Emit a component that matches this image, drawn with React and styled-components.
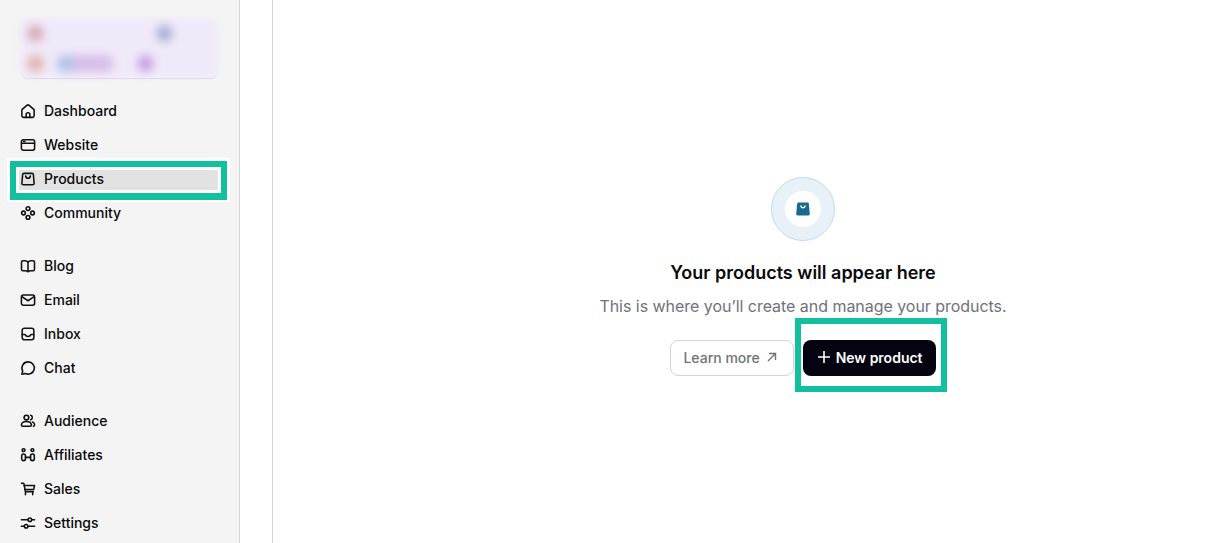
import React from 'react';
import styled, { createGlobalStyle } from 'styled-components';

const GlobalStyle = createGlobalStyle`
  html, body {
    margin: 0;
    height: 100%;
    overflow: hidden;
    background: #fff;
    font-family: Inter, "Liberation Sans", sans-serif;
  }
`;

const icons = {
  home: (
    <>
      <path d="M1.500 6.600 6.800 2a1.800 1.800 0 0 1 2.400 0l5.300 4.600v6.400a1.800 1.800 0 0 1-1.800 1.800H3.300a1.800 1.800 0 0 1-1.800-1.800z" />
      <path d="M6 14.800v-3a2 2 0 0 1 4 0v3" />
    </>
  ),
  website: (
    <>
      <rect x="1" y="2.500" width="14" height="11" rx="2" />
      <path d="M1 6.200h14" />
      <path d="M3.300 4.300h1.400" />
    </>
  ),
  products: (
    <>
      <path d="M3.600 2h8.800c.7 0 1.200.5 1.300 1.200l.8 9.300c.1.900-.6 1.700-1.500 1.700H3c-.9 0-1.600-.8-1.500-1.700l.8-9.300C2.400 2.500 2.900 2 3.600 2z" />
      <path d="M5.500 4.800c.3 1.600 1.200 2.400 2.500 2.400s2.200-.8 2.500-2.400" />
    </>
  ),
  community: (
    <>
      <circle cx="8" cy="3.300" r="2" />
      <circle cx="8" cy="12.700" r="2" />
      <circle cx="3.200" cy="8" r="2" />
      <circle cx="12.800" cy="8" r="2" />
    </>
  ),
  blog: (
    <>
      <path d="M8 3.900C7.300 2.900 6.300 2.400 5 2.400H2.600a1.500 1.500 0 0 0-1.500 1.500v7.600a1.500 1.500 0 0 0 1.500 1.500H5c1.400 0 2.400.3 3 1 .6-.7 1.600-1 3-1h2.400a1.500 1.500 0 0 0 1.500-1.500V3.900a1.500 1.500 0 0 0-1.500-1.500H11c-1.300 0-2.300.5-3 1.500z" />
      <path d="M8 3.900v10" />
    </>
  ),
  email: (
    <>
      <rect x="1" y="2.700" width="14" height="10.800" rx="2" />
      <path d="m1.500 4.500 6.500 4.300 6.500-4.300" />
    </>
  ),
  inbox: (
    <>
      <rect x="1.800" y="1.800" width="12.400" height="12.400" rx="2.400" />
      <path d="M1.800 8.600h3.100c.6 1.300 1.700 2 3.100 2s2.500-.7 3.100-2h3.100" />
    </>
  ),
  chat: (
    <path d="M8.300 1.500a6.500 6.500 0 1 1-3 12.300L1.500 14.700l.9-3.500A6.500 6.500 0 0 1 8.300 1.500z" />
  ),
  audience: (
    <>
      <circle cx="6.300" cy="4.300" r="2.500" />
      <path d="M1 12.300c0-2.400 2.300-3.800 5.300-3.800s5.300 1.400 5.300 3.800c0 .9-.6 1.300-1.300 1.300H2.300c-.7 0-1.300-.4-1.300-1.300z" />
      <path d="M10.800 1.900a2.500 2.500 0 0 1 0 4.800" />
      <path d="M12.800 9c1.300.5 2.200 1.600 2.200 3.100 0 .8-.5 1.400-1.300 1.500" />
    </>
  ),
  affiliates: (
    <>
      <circle cx="3.300" cy="2.800" r="1.500" />
      <circle cx="12.700" cy="2.800" r="1.500" />
      <rect x="1.300" y="7" width="4" height="7" rx="2" />
      <rect x="10.700" y="7" width="4" height="7" rx="2" />
      <path d="M5.300 10.500h5.400" />
    </>
  ),
  sales: (
    <>
      <path d="M1 1.800h1.700a1 1 0 0 1 1 .8L5.100 10a1 1 0 0 0 1 .8h7.400" />
      <path d="M3.900 4.200H15l-1 4.400H4.700" />
      <path d="M5.300 11v3.200M13 11v3.200" />
    </>
  ),
  settings: (
    <>
      <path d="M1 4.500h7M12 4.500h3" />
      <circle cx="10" cy="4.500" r="1.900" />
      <path d="M1 11.500h3M8 11.500h7" />
      <circle cx="6" cy="11.500" r="1.900" />
    </>
  ),
};

const navGroups = [
  [
    { label: 'Dashboard', icon: 'home' },
    { label: 'Website', icon: 'website' },
    { label: 'Products', icon: 'products', active: true },
    { label: 'Community', icon: 'community' },
  ],
  [
    { label: 'Blog', icon: 'blog' },
    { label: 'Email', icon: 'email' },
    { label: 'Inbox', icon: 'inbox' },
    { label: 'Chat', icon: 'chat' },
  ],
  [
    { label: 'Audience', icon: 'audience' },
    { label: 'Affiliates', icon: 'affiliates' },
    { label: 'Sales', icon: 'sales' },
    { label: 'Settings', icon: 'settings' },
  ],
];

const App = () => {
  return (
    <Page>
      <GlobalStyle />
      <Sidebar>
        <BlurredCard>
          <BlurRow>
            <Blob $color="#d8aebd" />
            <Blob $color="#aab4d6" $left={112} />
          </BlurRow>
          <BlurRow>
            <Blob $color="#e2b6ae" />
            <Pill />
            <Blob $color="#c9a4e8" $left={24} />
          </BlurRow>
        </BlurredCard>
        <Nav>
          {navGroups.map((group, i) => (
            <NavGroup key={i}>
              {group.map((item) => (
                <NavItem key={item.label} $active={item.active}>
                  <NavIcon viewBox="-0.5 -0.5 17 17">{icons[item.icon]}</NavIcon>
                  {item.label}
                </NavItem>
              ))}
            </NavGroup>
          ))}
        </Nav>
      </Sidebar>
      <Gutter />
      <Main>
        <Ring>
          <RingInner>
            <svg width="14" height="14" viewBox="0 0 14 14">
              <path d="M2.400.5h9.200c.6 0 1.100.5 1.200 1.100l1 10.200c.1.900-.6 1.700-1.500 1.700H1.700c-.9 0-1.600-.8-1.500-1.700l1-10.200C1.300 1 1.800.5 2.400.5z" fill="#19688f" />
              <path d="M4.900 4c.3 1.200 1 1.800 2.100 1.800S8.800 5.200 9.100 4" fill="none" stroke="#fff" strokeWidth="1.300" strokeLinecap="round" />
            </svg>
          </RingInner>
        </Ring>
        <Title>Your products will appear here</Title>
        <Subtitle>This is where you’ll create and manage your products.</Subtitle>
        <Actions>
          <LearnMore>
            Learn more
            <svg width="14" height="14" viewBox="0 0 14 14" fill="none" stroke="#71717a" strokeWidth="1.400">
              <path d="M3 11 10.500 3.500M4 3.500h6.500v6.500" />
            </svg>
          </LearnMore>
          <NewProduct>
            <svg width="14" height="14" viewBox="0 0 14 14" fill="none" stroke="#fff" strokeWidth="1.600">
              <path d="M7 1v12M1 7h12" />
            </svg>
            New product
          </NewProduct>
        </Actions>
      </Main>
    </Page>
  );
};

const Page = styled.div`
  display: flex;
  height: 543px;
  overflow: hidden;
`;

const Sidebar = styled.aside`
  box-sizing: border-box;
  flex: 0 0 240px;
  padding: 18px 21px 0 20px;
  background: #f4f4f4;
  border-right: 1px solid #d4d4d8;
`;

const BlurredCard = styled.div`
  position: relative;
  isolation: isolate;
  box-sizing: border-box;
  display: flex;
  flex-direction: column;
  gap: 13px;
  height: 61px;
  padding: 7px 7px 0 7px;
  border-bottom: 1px solid #dcc9f5;
  border-radius: 8px;

  &::before {
    content: "";
    position: absolute;
    z-index: -1;
    inset: 0;
    background: #f0e9f9;
    border-radius: 8px;
    filter: blur(3px);
  }
`;

const BlurRow = styled.div`
  display: flex;
  align-items: center;
  height: 17px;
  filter: blur(4px);
`;

const Blob = styled.span`
  flex: none;
  width: 17px;
  height: 17px;
  margin-left: ${(p) => p.$left || 0}px;
  border-radius: 50%;
  background: ${(p) => p.$color};
`;

const Pill = styled.span`
  flex: none;
  width: 56px;
  height: 17px;
  margin-left: 13px;
  border-radius: 6px;
  background: linear-gradient(90deg, #b4c5ea 0 30%, #d8bfe9 30% 100%);
`;

const Nav = styled.nav`
  display: flex;
  flex-direction: column;
  gap: 19px;
  margin-top: 15px;
`;

const NavGroup = styled.div`
  display: flex;
  flex-direction: column;
`;

const NavItem = styled.div`
  position: relative;
  z-index: 0;
  display: flex;
  align-items: center;
  gap: 8px;
  height: 34px;
  font-size: 14px;
  font-weight: 500;
  line-height: 20px;
  color: #09090b;

  ${(p) =>
    p.$active &&
    `
    &::before {
      content: "";
      position: absolute;
      z-index: -1;
      left: -1px;
      right: 0;
      top: 8px;
      height: 20px;
      background: #e2e2e2;
      box-shadow: 0 0 0 3px #fff, 0 0 0 9px #12bf9f, 0 1px 0 9px #12bf9f, 0 0 0 12px #fff;
    }
  `}
`;

const NavIcon = styled.svg`
  flex: none;
  width: 16px;
  height: 16px;
  fill: none;
  stroke: #111114;
  stroke-width: 1.650;
  stroke-linecap: round;
  stroke-linejoin: round;
`;

const Gutter = styled.div`
  box-sizing: border-box;
  flex: 0 0 33px;
  background: #fff;
  border-right: 1px solid #d4d4d8;
`;

const Main = styled.main`
  flex: 1;
  display: flex;
  flex-direction: column;
  align-items: center;
  padding: 177px 0 0 105px;
  background: #fff;
`;

const Ring = styled.div`
  box-sizing: border-box;
  display: flex;
  align-items: center;
  justify-content: center;
  width: 64px;
  height: 64px;
  background: #e8f1f7;
  border: 1px solid #bfdcea;
  border-radius: 50%;
`;

const RingInner = styled.div`
  display: flex;
  align-items: center;
  justify-content: center;
  width: 36px;
  height: 36px;
  background: #fff;
  border-radius: 50%;
`;

const Title = styled.h2`
  margin: 20px 0 0;
  font-size: 18px;
  font-weight: 600;
  line-height: 24px;
  color: #09090b;
`;

const Subtitle = styled.p`
  margin: 9px 0 0;
  font-size: 16px;
  line-height: 24px;
  letter-spacing: -0.04px;
  color: #71717a;
`;

const Actions = styled.div`
  display: flex;
  gap: 9px;
  margin-top: 22px;
`;

const LearnMore = styled.button`
  box-sizing: border-box;
  display: flex;
  align-items: center;
  gap: 5px;
  height: 36px;
  padding: 0 14px 2px 12px;
  background: #fff;
  border: 1px solid #d4d4d8;
  border-radius: 8px;
  font: 500 14px Inter, "Liberation Sans", sans-serif;
  color: #71717a;
`;

const NewProduct = styled.button`
  position: relative;
  box-sizing: border-box;
  display: flex;
  align-items: center;
  gap: 5px;
  height: 36px;
  padding: 0 13px 2px 14px;
  background: #05030f;
  border: none;
  border-radius: 8px;
  font: 600 14px Inter, "Liberation Sans", sans-serif;
  color: #fff;

  &::after {
    content: "";
    position: absolute;
    left: -8px;
    right: -11px;
    top: -22px;
    bottom: -16px;
    border: 6px solid #12bf9f;
    pointer-events: none;
  }
`;

export default App;
